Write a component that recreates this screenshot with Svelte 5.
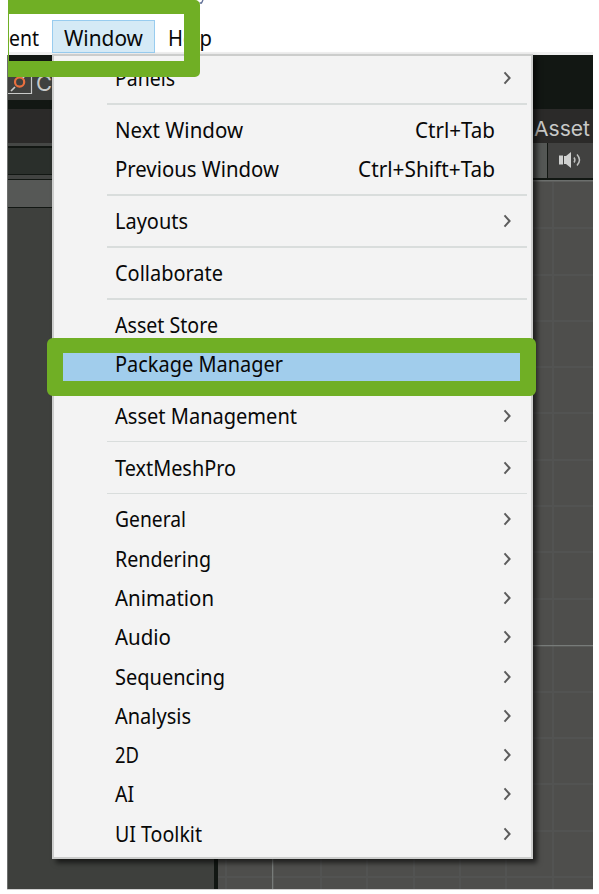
<script>
  const groups = [
    [{ label: 'Panels', w: 60, sub: true }],
    [
      { label: 'Next Window', w: 128, keys: 'Ctrl+Tab', kw: 80 },
      { label: 'Previous Window', w: 164, keys: 'Ctrl+Shift+Tab', kw: 137 }
    ],
    [{ label: 'Layouts', w: 73, sub: true }],
    [{ label: 'Collaborate', w: 108 }],
    [
      { label: 'Asset Store', w: 103 },
      { label: 'Package Manager', w: 168, selected: true }
    ],
    [{ label: 'Asset Management', w: 182, sub: true }],
    [{ label: 'TextMeshPro', w: 121, sub: true }],
    [
      { label: 'General', w: 71, sub: true },
      { label: 'Rendering', w: 96, sub: true },
      { label: 'Animation', w: 99, sub: true },
      { label: 'Audio', w: 56, sub: true },
      { label: 'Sequencing', w: 110, sub: true },
      { label: 'Analysis', w: 76, sub: true },
      { label: '2D', w: 24, sub: true },
      { label: 'AI', w: 19, sub: true },
      { label: 'UI Toolkit', w: 87, sub: true }
    ]
  ];
  const gridRows = [228, 275, 321, 367, 413, 460, 506, 552, 599, 692, 738, 784, 831, 877];
  const gridCols = [226, 321, 367, 414, 460, 506, 553];
</script>

{#snippet word(text, w)}
  <svg class="word" width={w} height="30">
    <text x="0" y="22.500" textLength={w} lengthAdjust="spacingAndGlyphs">{text}</text>
  </svg>
{/snippet}

<main>
  <svg class="editor" width="599" height="894">
    <rect x="8" y="52" width="585" height="3" fill="#f0f0f0" />
    <rect x="7" y="55" width="586" height="834" fill="#121713" />
    <rect x="8" y="61" width="200" height="39" fill="#40413f" />
    <rect x="8" y="109" width="585" height="34" fill="#2b2a29" />
    <rect x="8" y="143" width="46" height="3" fill="#454745" />
    <rect x="8" y="148" width="46" height="26" fill="#2a2f2b" />
    <rect x="8" y="175" width="46" height="4" fill="#424442" />
    <rect x="8" y="180" width="46" height="27" fill="#565856" />
    <rect x="8" y="208" width="206" height="681" fill="#3e403d" />
    <rect x="7" y="55" width="1" height="834" fill="#6d6f6d" />
    <rect x="218" y="180" width="375" height="709" fill="#4e4e4c" />
    <rect x="530" y="143" width="17" height="35" fill="#545755" />
    <rect x="548" y="143" width="45" height="35" fill="#414140" />
    <rect x="530" y="180" width="63" height="1.5" fill="#6c6f6d" />
    {#each gridRows as y}
      <rect x="218" y={y - 1} width="375" height="2" fill="#525352" />
    {/each}
    {#each gridCols as x}
      <rect x={x - 1} y="182" width="2" height="707" fill="#525352" />
    {/each}
    <rect x="218" y="645" width="375" height="1.300" fill="#777b79" />
    <rect x="272" y="182" width="1.300" height="707" fill="#777b79" />
    <rect x="7" y="889" width="586" height="1" fill="#d0d0d0" />
    <path d="M8 93.500H31.500V70" fill="none" stroke="#c9cac9" stroke-width="1.200" />
    <circle cx="19.600" cy="82" r="4.600" fill="none" stroke="#e8703f" stroke-width="2.200" />
    <path d="M15 87L11 91M23 78L25 75" stroke="#c9cac9" stroke-width="1.700" fill="none" />
    <text class="unity" x="36" y="91" font-size="22">C</text>
    <text class="unity" x="534" y="135.500" font-size="20.500" textLength="56" lengthAdjust="spacingAndGlyphs">Asset</text>
    <g fill="#d0d1d0">
      <rect x="559" y="155.500" width="4" height="9" />
      <path d="M564 156H566L571 152V168L566 164H564Z" />
      <path d="M574 157.500Q575.800 160 574 162.500M577 154.500Q582 160 577 165.500" fill="none" stroke="#bfc0bf" stroke-width="1.500" />
    </g>
    <path d="M203 0L201.500 3H199.500" fill="none" stroke="#5b6b93" stroke-width="1.300" />
  </svg>

  <header>
    <div class="tab ent">{@render word('ent', 30)}</div>
    <div class="tab window">{@render word('Window', 79)}</div>
    <div class="tab help">{@render word('Help', 44)}</div>
  </header>

  <nav>
    {#each groups as items, i}
      {#if i > 0}<hr />{/if}
      {#each items as item}
        <div class="item" class:selected={item.selected}>
          {@render word(item.label, item.w)}
          {#if item.keys}
            <span class="keys">{@render word(item.keys, item.kw)}</span>
          {/if}
          {#if item.sub}
            <svg class="arrow" width="9" height="14" viewBox="0 0 9 14"><path d="M1.500 1.300L6.600 7L1.500 12.700" /></svg>
          {/if}
        </div>
      {/each}
    {/each}
  </nav>

  <div class="frame top"></div>
  <div class="frame pick"></div>
</main>

<style>
  :global(body) {
    background: #fff;
  }
  main {
    position: relative;
    width: 599px;
    height: 894px;
    overflow: hidden;
    background: #fff;
    font-family: 'Noto Sans', 'Open Sans', sans-serif;
    font-size: 21.6px;
  }
  .editor {
    position: absolute;
    inset: 0;
  }
  .unity {
    font-family: Inter, sans-serif;
    fill: #c8c9c8;
  }
  header {
    position: relative;
    display: flex;
    height: 54px;
    padding: 20px 0 0 9px;
    box-sizing: border-box;
  }
  .tab {
    height: 33px;
    box-sizing: border-box;
    padding-top: 2.5px;
  }
  .ent {
    width: 43px;
    padding-left: 0;
  }
  .window {
    width: 103px;
    padding: 1.5px 0 0 11px;
    border: 1px solid #98ccef;
    background: #d5eaf6;
  }
  .help {
    padding-left: 13px;
  }
  .word {
    display: block;
    flex: none;
    overflow: visible;
    fill: #080808;
  }
  nav {
    position: relative;
    width: 481px;
    height: 805px;
    margin-left: 52px;
    box-sizing: border-box;
    padding: 2.6px 0 0;
    border: 2px solid #cccdcc;
    background: #f3f3f3;
    box-shadow: 4px 4px 5px rgba(0, 0, 0, 0.6);
  }
  .item {
    display: flex;
    align-items: center;
    height: 39.3px;
    padding: 0 19px 0 61px;
  }
  .selected {
    background: #a1cdec;
    margin: 0 4px;
    padding-left: 57px;
  }
  .keys {
    margin-left: auto;
    margin-right: 17px;
  }
  .arrow {
    margin-left: auto;
    fill: none;
    stroke: #5c5c5c;
    stroke-width: 2;
  }
  hr {
    height: 1.5px;
    margin: 5.5px 4px 5.5px 53px;
    border: 0;
    background: #d9dddc;
  }
  .frame {
    position: absolute;
    box-sizing: border-box;
    border: 15.5px solid #70af25;
  }
  .top {
    left: 8px;
    top: 0;
    width: 192px;
    height: 77px;
    border-width: 14px 16px 16px 1px;
    border-radius: 0 5px 5px 0;
  }
  .pick {
    left: 47px;
    top: 338px;
    width: 489px;
    height: 58px;
    border-width: 15px 16px 15px 16px;
    border-radius: 6px;
  }
</style>
